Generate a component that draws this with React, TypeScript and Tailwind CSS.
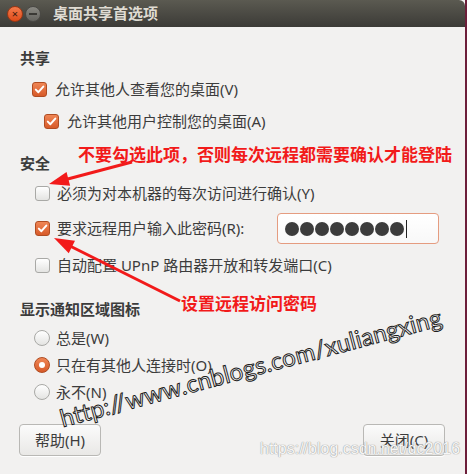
const ui = { fontFamily: '"Noto Sans", "Noto Sans CJK SC", sans-serif' }
const cjkBold = { fontFamily: '"Noto Sans CJK SC", "Noto Sans", sans-serif' }

function arrowHead(x1: number, y1: number, x2: number, y2: number, len = 20, half = 7) {
  const a = Math.atan2(y2 - y1, x2 - x1)
  const bx = x2 - len * Math.cos(a)
  const by = y2 - len * Math.sin(a)
  const px = -Math.sin(a) * half
  const py = Math.cos(a) * half
  return `${x2},${y2} ${bx + px},${by + py} ${bx - px},${by - py}`
}

function Check({ on }: { on?: boolean }) {
  if (on)
    return (
      <span className="flex h-[15px] w-[15px] shrink-0 items-center justify-center rounded-[3px] border border-[#b04c22] bg-gradient-to-b from-[#ef8655] to-[#d75a28]">
        <svg width="11" height="11" viewBox="0 0 11 11">
          <path d="M1.8 5.6 L4.4 8.2 L9.3 2.6" fill="none" stroke="#fff" strokeWidth="2" strokeLinecap="round" strokeLinejoin="round" />
        </svg>
      </span>
    )
  return <span className="h-[15px] w-[15px] shrink-0 rounded-[3px] border border-[#a9a9a6] bg-gradient-to-b from-white to-[#e4e4e2]" />
}

function Radio({ on }: { on?: boolean }) {
  if (on)
    return (
      <span className="flex h-[16px] w-[16px] shrink-0 items-center justify-center rounded-full border border-[#b04c22] bg-gradient-to-b from-[#ef8655] to-[#d75a28]">
        <span className="h-[6px] w-[6px] rounded-full bg-white" />
      </span>
    )
  return <span className="h-[16px] w-[16px] shrink-0 rounded-full border border-[#a9a9a6] bg-gradient-to-b from-white to-[#e4e4e2]" />
}

function Button({ label }: { label: string }) {
  return (
    <button className="flex h-[32px] w-[82px] items-center justify-center rounded-[4px] border border-[#b9b8b5] bg-gradient-to-b from-[#fbfbfb] to-[#e9e8e6] text-[15px] text-[#3c3c3c] shadow-[0_1px_0_#fff]">
      {label}
    </button>
  )
}

export default function App() {
  const a1 = { x1: 132, y1: 162, x2: 49, y2: 184 }
  const a2 = { x1: 180, y1: 301, x2: 54, y2: 238 }
  return (
    <div className="relative h-[474px] w-[467px] overflow-hidden bg-[#6d1e3a]" style={ui}>
      <div className="flex h-full w-[465px] flex-col bg-[#f2f1f0] text-[15px] text-[#3c3c3c]">
        {/* title bar */}
        <div className="flex h-[27px] shrink-0 items-center rounded-tr-[6px] bg-gradient-to-b from-[#5b5a51] to-[#3c3b37] pl-[7px]">
          <span className="flex h-[16px] w-[16px] items-center justify-center rounded-full border border-[#9c3714] bg-gradient-to-b from-[#f47a4a] to-[#df4b17] text-[11px] leading-none text-[#3a1a0e]">
            ×
          </span>
          <span className="ml-[2px] flex h-[16px] w-[16px] items-center justify-center rounded-full border border-[#4a4945] bg-gradient-to-b from-[#8a8983] to-[#65645f]">
            <span className="h-[2px] w-[8px] bg-[#3a3935]" />
          </span>
          <span className="ml-[12px] text-[15px] font-bold text-[#dfdbd2]" style={cjkBold}>
            桌面共享首选项
          </span>
        </div>

        <div className="flex flex-col pl-[20px]">
          <div className="mt-[21px] h-[20px] font-bold leading-[20px]">共享</div>
          <div className="mt-[10px] flex h-[22px] items-center gap-[8px] pl-[12px]">
            <Check on />
            <span>允许其他人查看您的桌面(V)</span>
          </div>
          <div className="mt-[10px] flex h-[22px] items-center gap-[8px] pl-[24px]">
            <Check on />
            <span>允许其他用户控制您的桌面(A)</span>
          </div>

          <div className="mt-[21px] h-[20px] font-bold leading-[20px]">安全</div>
          <div className="mt-[9px] flex h-[22px] items-center gap-[7px] pl-[15px]">
            <Check />
            <span>必须为对本机器的每次访问进行确认(Y)</span>
          </div>
          <div className="mt-[9px] flex h-[31px] items-center gap-[7px] pl-[15px]">
            <Check on />
            <span className="w-[213px]">要求远程用户输入此密码(R):</span>
            <div className="flex h-[31px] w-[162px] items-center gap-[1px] rounded-[4px] border border-[#e59c80] bg-gradient-to-b from-white to-[#f8f8f8] pl-[7px]">
              {Array.from({ length: 8 }).map((_, i) => (
                <span key={i} className="h-[14px] w-[14px] rounded-full bg-[#3c3c3c]" />
              ))}
              <span className="ml-[1px] h-[18px] w-[1px] bg-[#222]" />
            </div>
          </div>
          <div className="mt-[10px] flex h-[22px] items-center gap-[7px] pl-[15px]">
            <Check />
            <span>自动配置 UPnP 路由器开放和转发端口(C)</span>
          </div>

          <div className="mt-[23px] h-[20px] font-bold leading-[20px]">显示通知区域图标</div>
          <div className="mt-[8px] flex h-[22px] items-center gap-[6px] pl-[14px]">
            <Radio />
            <span>总是(W)</span>
          </div>
          <div className="mt-[5px] flex h-[22px] items-center gap-[6px] pl-[14px]">
            <Radio on />
            <span>只在有其他人连接时(O)</span>
          </div>
          <div className="mt-[5px] flex h-[22px] items-center gap-[6px] pl-[14px]">
            <Radio />
            <span>永不(N)</span>
          </div>
        </div>

        <div className="mt-[21px] flex justify-between pl-[19px] pr-[20px]">
          <Button label="帮助(H)" />
          <Button label="关闭(C)" />
        </div>
      </div>

      {/* annotations */}
      <div className="absolute left-[78px] top-[143px] text-[17px] font-bold leading-[22px] text-[#f21a1a]" style={cjkBold}>
        不要勾选此项，否则每次远程都需要确认才能登陆
      </div>
      <div className="absolute left-[181px] top-[292px] text-[17px] font-bold leading-[22px] text-[#f21a1a]" style={cjkBold}>
        设置远程访问密码
      </div>
      <svg className="pointer-events-none absolute left-0 top-0" width="467" height="474">
        <line x1={a1.x1} y1={a1.y1} x2={a1.x2 + 14} y2={a1.y2 - 3.7} stroke="#f21a1a" strokeWidth="3" />
        <polygon points={arrowHead(a1.x1, a1.y1, a1.x2, a1.y2)} fill="#f21a1a" />
        <line x1={a2.x1} y1={a2.y1} x2={a2.x2 + 14} y2={a2.y2 + 7} stroke="#f21a1a" strokeWidth="3" />
        <polygon points={arrowHead(a2.x1, a2.y1, a2.x2, a2.y2)} fill="#f21a1a" />
      </svg>

      {/* watermarks */}
      <div
        className="absolute left-[64px] top-[404px] origin-[0_100%] -rotate-[15deg] whitespace-nowrap text-[24px] leading-[28px] tracking-[0.2px] text-[#fafafa] [-webkit-text-stroke:1px_#1e1e1e]"
        style={{ fontFamily: 'Lato, "DejaVu Sans", sans-serif' }}
      >
        http://www.cnblogs.com/xuliangxing
      </div>
      <div
        className="absolute left-[260px] top-[439px] text-[16px] leading-[20px] text-[#f6f6f6] [text-shadow:0_0_1px_#9a9a9a,0_0_1px_#9a9a9a]"
        style={{ fontFamily: '"Liberation Sans", Arial, sans-serif' }}
      >
        https://blog.csdn.net/dc2016
      </div>
    </div>
  )
}
